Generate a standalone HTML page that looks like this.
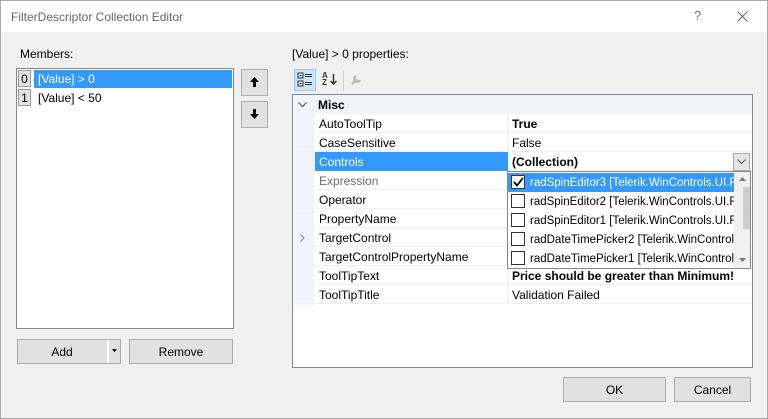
<!DOCTYPE html>
<html><head><meta charset="utf-8"><style>
*{box-sizing:border-box;margin:0;padding:0}
body{width:768px;height:419px;background:#fff;font-family:"Liberation Sans",sans-serif;font-size:12px;color:#000;position:relative;overflow:hidden}
.a{position:absolute}
.win{left:0;top:0;width:768px;height:419px;border:1px solid #aaa;background:#f0f0f0}
.title{left:1px;top:1px;width:766px;height:31px;background:#fff}
.btn{background:#e1e1e1;border:1px solid #adadad;text-align:center;line-height:24px}
.row{position:absolute;left:0;width:459px;height:19px;border-bottom:1px solid #f0f0f0;line-height:20px}
.n{position:absolute;left:22px;width:193px;height:19px;padding-left:4px}
.v{position:absolute;left:215px;width:244px;height:19px;padding-left:3px;border-left:1px solid #f0f0f0}
.it{position:absolute;left:0;width:226px;height:19px;line-height:20px;white-space:nowrap;overflow:hidden;padding-left:22px;font-size:11.5px}
.cb{position:absolute;left:3px;top:2px;width:14px;height:14px;border:1px solid #333;background:#fff}
</style></head><body>
<div class="a win"></div>
<div class="a title"></div>
<div class="a" style="left:11px;top:10px;color:#666;font-size:12px">FilterDescriptor Collection Editor</div>
<div class="a" style="left:694px;top:8px;color:#777;font-size:13px">?</div>
<svg class="a" style="left:737px;top:11px" width="11" height="11"><path d="M0.5 0.5L10.5 10.5M10.5 0.5L0.5 10.5" stroke="#666" stroke-width="1"/></svg>

<div class="a" style="left:20px;top:47px">Members:</div>
<div class="a" style="left:16px;top:68px;width:218px;height:261px;background:#fff;border:1px solid #828790"></div>
<div class="a" style="left:18px;top:70px;width:13px;height:17px;background:#e1e1e1;border:1px solid #999;text-align:center;line-height:16px">0</div>
<div class="a" style="left:34px;top:70px;width:198px;height:18px;background:#3399ff;color:#fff;line-height:18px;padding-left:4px">[Value] &gt; 0</div>
<div class="a" style="left:18px;top:89px;width:13px;height:17px;background:#e1e1e1;border:1px solid #999;text-align:center;line-height:16px">1</div>
<div class="a" style="left:34px;top:89px;line-height:18px;padding-left:4px">[Value] &lt; 50</div>

<div class="a btn" style="left:241px;top:69px;width:27px;height:27px"></div>
<svg class="a" style="left:250px;top:77px" width="9" height="10"><path d="M4.5 0L9 5H6V10H3V5H0Z" fill="#000"/></svg>
<div class="a btn" style="left:241px;top:101px;width:27px;height:27px"></div>
<svg class="a" style="left:250px;top:109px" width="9" height="10"><path d="M4.5 10L9 5H6V0H3V5H0Z" fill="#000"/></svg>

<div class="a btn" style="left:17px;top:339px;width:104px;height:25px"><span style="position:absolute;left:0;width:88px">Add</span></div>
<div class="a" style="left:107px;top:340px;width:2px;height:23px;background:#fff"></div>
<svg class="a" style="left:112px;top:349px" width="5" height="3"><path d="M0 0H5L2.5 3Z" fill="#000"/></svg>
<div class="a btn" style="left:129px;top:339px;width:104px;height:25px">Remove</div>

<div class="a" style="left:292px;top:47px">[Value] &gt; 0 properties:</div>
<div class="a" style="left:294px;top:69px;width:22px;height:22px;background:#cce4f7;border:1px solid #99c9ef"></div>
<svg class="a" style="left:297px;top:72px" width="16" height="16"><g fill="#333"><rect x="1" y="1" width="5" height="5" fill="none" stroke="#333"/><rect x="1" y="9" width="5" height="5" fill="none" stroke="#333"/><rect x="8" y="2" width="7" height="1"/><rect x="8" y="4" width="7" height="1"/><rect x="8" y="10" width="7" height="1"/><rect x="8" y="12" width="7" height="1"/><rect x="2.5" y="3" width="2" height="1"/><rect x="2.5" y="11" width="2" height="1"/></g></svg>
<div class="a" style="left:322px;top:72px;font-size:8px;font-weight:bold;line-height:7px;color:#333">A<br>Z</div>
<svg class="a" style="left:330px;top:74px" width="7" height="11"><path d="M3.5 0V10M0.5 7L3.5 10L6.5 7" stroke="#333" stroke-width="1.5" fill="none"/></svg>
<div class="a" style="left:343px;top:71px;width:1px;height:20px;background:#ccc"></div>
<svg class="a" style="left:350px;top:73px" width="13" height="13"><path d="M2 11L7 6M6 3a3 3 0 1 0 4 4" stroke="#bbb" stroke-width="2.5" fill="none"/></svg>

<div class="a" style="left:292px;top:94px;width:461px;height:274px;background:#fff;border:1px solid #828790">
<div class="a" style="left:0;top:0;width:21px;height:210px;background:#f0f4f9"></div>
<div class="row" style="top:0;background:#f0f4f9;border:none"><svg class="a" style="left:5px;top:7px" width="9" height="6"><path d="M0.5 0.5L4.5 4.5L8.5 0.5" stroke="#555" fill="none" stroke-width="1.2"/></svg><span class="a" style="left:25px;font-weight:bold">Misc</span></div>
<div class="row" style="top:19px"><div class="n">AutoToolTip</div><div class="v" style="font-weight:bold">True</div></div>
<div class="row" style="top:38px"><div class="n">CaseSensitive</div><div class="v">False</div></div>
<div class="row" style="top:57px"><div class="n" style="background:#3399ff;color:#fff">Controls</div><div class="v" style="font-weight:bold">(Collection)</div></div>
<div class="a" style="left:440px;top:58px;width:17px;height:18px;background:#e5e5e5;border:1px solid #aaa"></div>
<svg class="a" style="left:444px;top:64px" width="9" height="6"><path d="M0.5 0.5L4.5 4.5L8.5 0.5" stroke="#555" fill="none"/></svg>
<div class="row" style="top:76px"><div class="n" style="color:#6d6d6d">Expression</div></div>
<div class="row" style="top:95px"><div class="n">Operator</div></div>
<div class="row" style="top:114px"><div class="n">PropertyName</div></div>
<div class="row" style="top:133px"><svg class="a" style="left:7px;top:6px" width="5" height="8"><path d="M0.5 0.5L4 4L0.5 7.5" stroke="#888" fill="none"/></svg><div class="n">TargetControl</div></div>
<div class="row" style="top:152px"><div class="n">TargetControlPropertyName</div></div>
<div class="row" style="top:171px"><div class="n">ToolTipText</div><div class="v" style="font-weight:bold">Price should be greater than Minimum!</div></div>
<div class="row" style="top:190px"><div class="n">ToolTipTitle</div><div class="v">Validation Failed</div></div>
</div>

<div class="a" style="left:507px;top:171px;width:244px;height:98px;background:#fff;border:1px solid #828790;overflow:hidden">
<div class="it" style="top:1px;background:#3399ff;color:#fff"><div class="cb" style="border-color:#333"></div><svg class="a" style="left:5px;top:4px" width="11" height="10"><path d="M1 5L4 8.5L10 1" stroke="#000" stroke-width="1.8" fill="none"/></svg>radSpinEditor3 [Telerik.WinControls.UI.R</div>
<div class="it" style="top:20px"><div class="cb"></div>radSpinEditor2 [Telerik.WinControls.UI.R</div>
<div class="it" style="top:39px"><div class="cb"></div>radSpinEditor1 [Telerik.WinControls.UI.R</div>
<div class="it" style="top:58px"><div class="cb"></div>radDateTimePicker2 [Telerik.WinControls</div>
<div class="it" style="top:77px"><div class="cb"></div>radDateTimePicker1 [Telerik.WinControls</div>
<div class="a" style="left:226px;top:0;width:17px;height:96px;background:#f0f0f0"></div>
<svg class="a" style="left:231px;top:5px" width="7" height="4"><path d="M3.5 0L7 4H0Z" fill="#777"/></svg>
<div class="a" style="left:235px;top:15px;width:8px;height:42px;background:#cdcdcd"></div>
<svg class="a" style="left:231px;top:86px" width="7" height="4"><path d="M3.5 4L7 0H0Z" fill="#777"/></svg>
</div>

<div class="a btn" style="left:563px;top:377px;width:103px;height:25px">OK</div>
<div class="a btn" style="left:674px;top:377px;width:77px;height:25px">Cancel</div>
</body></html>
